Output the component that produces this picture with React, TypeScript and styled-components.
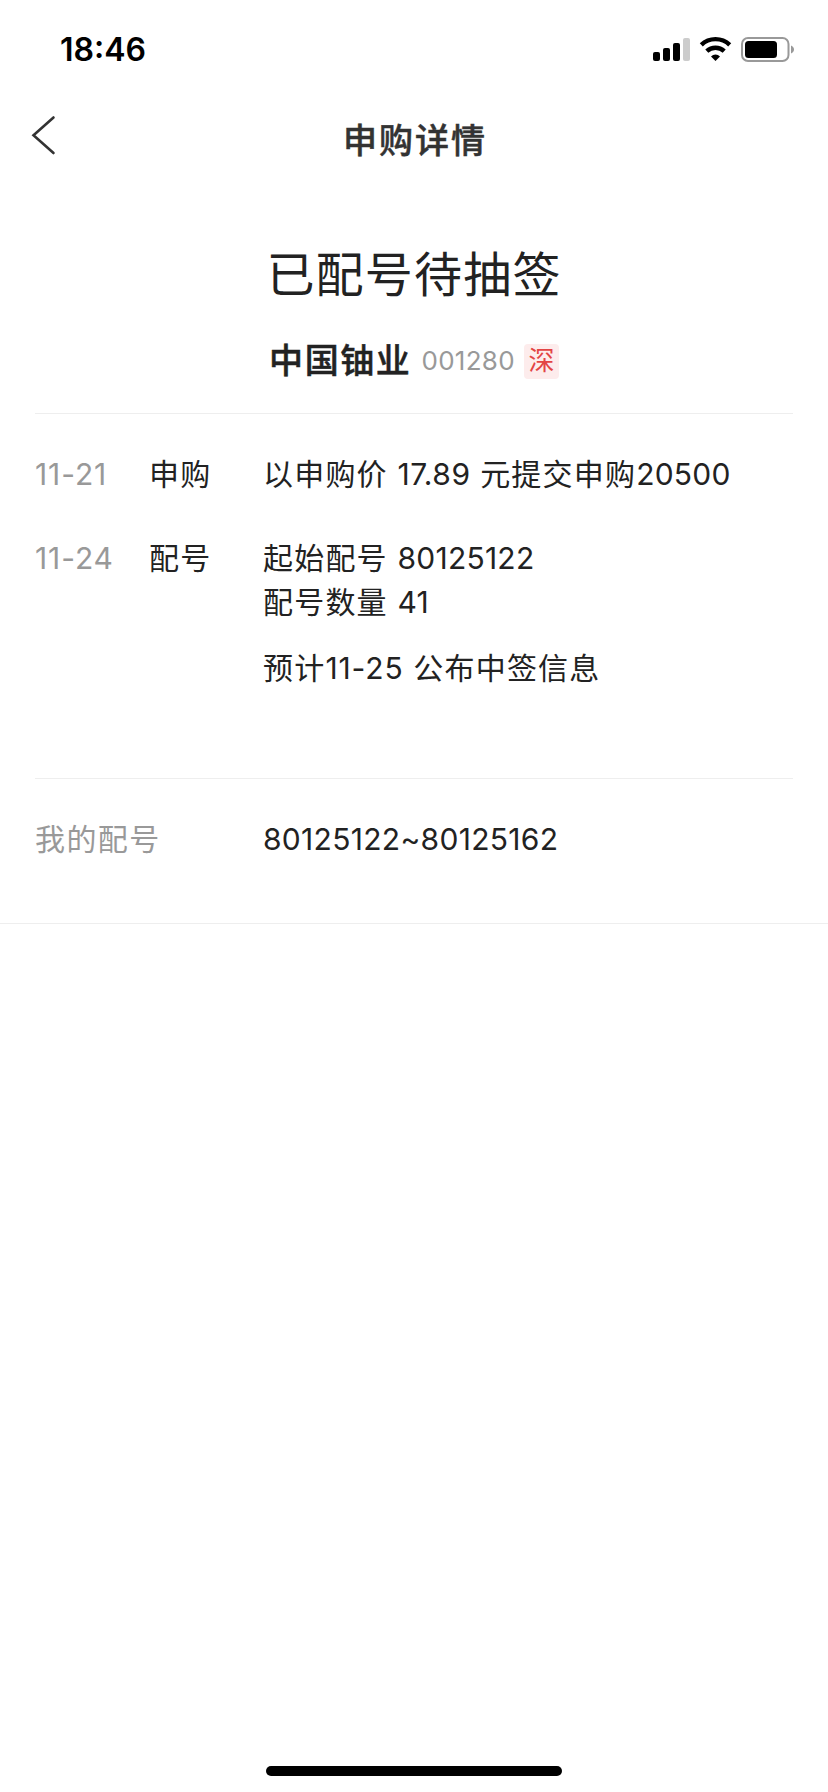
import React from 'react';
import styled, { createGlobalStyle } from 'styled-components';

const GlobalStyle = createGlobalStyle`
  * { box-sizing: border-box; }
  body { margin: 0; background: #fff; }
`;

const Screen = styled.div`
  width: 828px;
  height: 1792px;
  display: flex;
  flex-direction: column;
  background: #fff;
  color: #222;
  font-family: Inter, 'Noto Sans CJK SC', sans-serif;
  font-size: 30px;
  white-space: nowrap;
`;

const StatusBar = styled.header`
  height: 92px;
  flex: none;
  display: flex;
  justify-content: space-between;
  align-items: flex-start;
  padding: 30px 33px 0 60px;
  color: #000;
`;

const Clock = styled.time`
  font-size: 32px;
  line-height: 40px;
  font-weight: 600;
`;

const StatusIcons = styled.svg`
  display: block;
  margin-top: 6px;
`;

const NavBar = styled.nav`
  height: 96px;
  flex: none;
  display: grid;
  grid-template-columns: 100px 1fr 100px;
`;

const BackButton = styled.button`
  display: flex;
  align-items: flex-start;
  border: 0;
  padding: 22px 0 0 30px;
  background: none;
`;

const NavTitle = styled.h1`
  margin: 25px 0 0;
  font-size: 34px;
  line-height: 48px;
  font-weight: 500;
  letter-spacing: 2px;
  text-indent: 2px;
  text-align: center;
  color: #333;
  -webkit-text-stroke: 0.5px #333;
`;

const Summary = styled.section`
  height: 226px;
  flex: none;
  margin: 0 35px;
  border-bottom: 1px solid #eee;
`;

const Status = styled.h2`
  margin: 52px 0 0;
  font-size: 48px;
  line-height: 70px;
  font-weight: 400;
  letter-spacing: 1.2px;
  text-align: center;
`;

const StockLine = styled.div`
  display: flex;
  justify-content: center;
  align-items: center;
  height: 48px;
  margin-top: 27px;
`;

const StockName = styled.strong`
  font-size: 34px;
  line-height: 48px;
  font-weight: 500;
  letter-spacing: 1.6px;
  -webkit-text-stroke: 0.5px #222;
`;

const StockCode = styled.span`
  margin: 0 9px 0 10px;
  font-size: 26px;
  line-height: 36px;
  letter-spacing: 0.3px;
  color: #999;
`;

const MarketTag = styled.span`
  width: 35px;
  height: 35px;
  border-radius: 4px;
  background: #fdecec;
  color: #e34444;
  font-size: 26px;
  line-height: 34px;
  text-align: center;
`;

const Timeline = styled.section`
  height: 365px;
  flex: none;
  margin: 0 35px;
  padding-top: 38px;
  border-bottom: 1px solid #eee;
`;

const Entry = styled.div<{ $gap?: number }>`
  display: grid;
  grid-template-columns: 114px 114px 1fr;
  line-height: 44px;
  margin-top: ${({ $gap = 0 }) => $gap}px;
`;

const DateLabel = styled.time`
  letter-spacing: 0.9px;
  color: #999;
`;

const Stage = styled.span`
  letter-spacing: 1.3px;
`;

const Line = styled.div<{ $gap?: number }>`
  letter-spacing: 1.2px;
  margin-top: ${({ $gap = 0 }) => $gap}px;
`;

const Num = styled.span<{ $track?: number }>`
  letter-spacing: ${({ $track = 0.25 }) => $track}px;
`;

const Numbers = styled.section`
  height: 145px;
  flex: none;
  display: grid;
  grid-template-columns: 228px 1fr;
  padding: 38px 35px 0;
  line-height: 44px;
  border-bottom: 1px solid #eee;
`;

const NumbersLabel = styled.span`
  letter-spacing: 1.4px;
  color: #999;
`;

const HomeIndicator = styled.div`
  width: 296px;
  height: 10px;
  border-radius: 5px;
  margin: auto auto 16px;
  background: #000;
`;

export default function App() {
  return (
    <Screen>
      <GlobalStyle />
      <StatusBar>
        <Clock>18:46</Clock>
        <StatusIcons width="142" height="28" viewBox="0 0 142 28">
          <rect x="0" y="16" width="7" height="9" rx="2" />
          <rect x="10" y="12" width="7" height="13" rx="2" />
          <rect x="20" y="7" width="7" height="18" rx="2" />
          <rect x="30" y="2" width="7" height="23" rx="2" fill="#ccc" />
          <g fill="none" stroke="#000" strokeWidth="4.4">
            <path d="M48.300 8.800a20.500 20.500 0 0 1 28.400 0" />
            <path d="M53.800 15.200a12.600 12.600 0 0 1 17.400 0" />
          </g>
          <path d="M62.500 25l-4.500-4.600a6.500 6.500 0 0 1 9 0z" />
          <rect x="89" y="2" width="46.5" height="23" rx="6" fill="none" stroke="#999" strokeWidth="2" />
          <rect x="92" y="5" width="32" height="17" rx="3.5" />
          <path d="M138 9.500c4 1.400 4 6.600 0 8z" fill="#999" />
        </StatusIcons>
      </StatusBar>
      <NavBar>
        <BackButton aria-label="返回">
          <svg width="28" height="42" viewBox="0 0 28 42" fill="none" stroke="#333" strokeWidth="2.6" strokeLinecap="round">
            <path d="M23.5 3.500L3.500 21.300L23.500 39" />
          </svg>
        </BackButton>
        <NavTitle>申购详情</NavTitle>
      </NavBar>
      <Summary>
        <Status>已配号待抽签</Status>
        <StockLine>
          <StockName>中国铀业</StockName>
          <StockCode>001280</StockCode>
          <MarketTag>深</MarketTag>
        </StockLine>
      </Summary>
      <Timeline>
        <Entry>
          <DateLabel>11-21</DateLabel>
          <Stage>申购</Stage>
          <Line>以申购价 <Num $track={0.5}>17.89</Num> 元提交申购<Num>20500</Num></Line>
        </Entry>
        <Entry $gap={40}>
          <DateLabel>11-24</DateLabel>
          <Stage>配号</Stage>
          <div>
            <Line>起始配号 <Num>80125122</Num></Line>
            <Line>配号数量 <Num>41</Num></Line>
            <Line $gap={22}>预计<Num $track={0.9}>11-25</Num> 公布中签信息</Line>
          </div>
        </Entry>
      </Timeline>
      <Numbers>
        <NumbersLabel>我的配号</NumbersLabel>
        <Num $track={0.3}>80125122~80125162</Num>
      </Numbers>
      <HomeIndicator />
    </Screen>
  );
}
